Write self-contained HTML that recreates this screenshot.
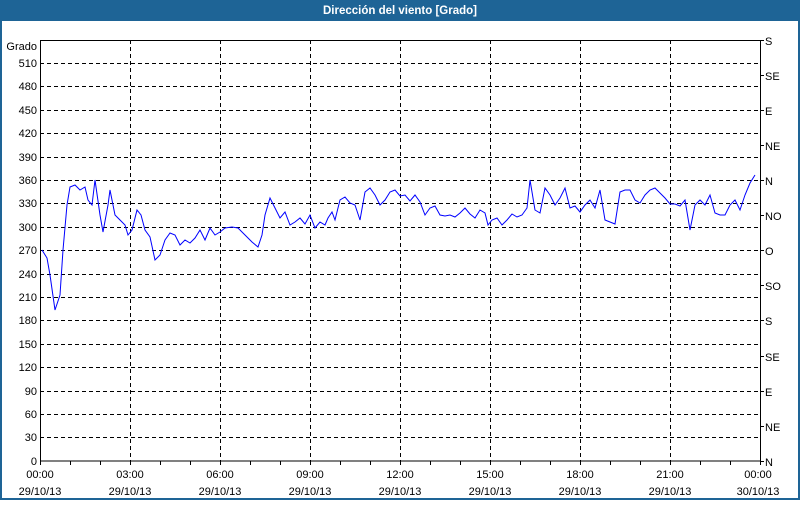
<!DOCTYPE html>
<html><head><style>
body{margin:0;width:800px;height:500px;overflow:hidden;background:#fff;font-family:"Liberation Sans",sans-serif}
</style></head><body>
<svg width="800" height="500" xmlns="http://www.w3.org/2000/svg" font-family="Liberation Sans, sans-serif" font-size="11">
<rect x="0" y="0" width="800" height="500" fill="#1e6496"/>
<rect x="2" y="21" width="796" height="477" fill="#fff"/>
<text x="400" y="14" fill="#fff" font-weight="bold" text-anchor="middle" font-size="11.5">Dirección del viento [Grado]</text>
<g stroke="#000" stroke-dasharray="4,3" stroke-width="1">
<line x1="40" x2="760" y1="63.5" y2="63.5"/><line x1="40" x2="760" y1="86.5" y2="86.5"/><line x1="40" x2="760" y1="110.5" y2="110.5"/><line x1="40" x2="760" y1="133.5" y2="133.5"/><line x1="40" x2="760" y1="157.5" y2="157.5"/><line x1="40" x2="760" y1="180.5" y2="180.5"/><line x1="40" x2="760" y1="203.5" y2="203.5"/><line x1="40" x2="760" y1="227.5" y2="227.5"/><line x1="40" x2="760" y1="250.5" y2="250.5"/><line x1="40" x2="760" y1="274.5" y2="274.5"/><line x1="40" x2="760" y1="297.5" y2="297.5"/><line x1="40" x2="760" y1="320.5" y2="320.5"/><line x1="40" x2="760" y1="344.5" y2="344.5"/><line x1="40" x2="760" y1="367.5" y2="367.5"/><line x1="40" x2="760" y1="391.5" y2="391.5"/><line x1="40" x2="760" y1="414.5" y2="414.5"/><line x1="40" x2="760" y1="437.5" y2="437.5"/>
<line x1="130.5" x2="130.5" y1="40" y2="461"/><line x1="220.5" x2="220.5" y1="40" y2="461"/><line x1="310.5" x2="310.5" y1="40" y2="461"/><line x1="400.5" x2="400.5" y1="40" y2="461"/><line x1="490.5" x2="490.5" y1="40" y2="461"/><line x1="580.5" x2="580.5" y1="40" y2="461"/><line x1="670.5" x2="670.5" y1="40" y2="461"/>
</g>
<path d="M40.5 461V40.5H760.5V461H40.5" fill="none" stroke="#000"/>
<g stroke="#000">
<path d="M70.5 461v4M100.5 461v4M130.5 461v4M160.5 461v4M190.5 461v4M220.5 461v4M250.5 461v4M280.5 461v4M310.5 461v4M340.5 461v4M370.5 461v4M400.5 461v4M430.5 461v4M460.5 461v4M490.5 461v4M520.5 461v4M550.5 461v4M580.5 461v4M610.5 461v4M640.5 461v4M670.5 461v4M700.5 461v4M730.5 461v4M760.5 461v4M40.5 461v4"/>
<path d="M760 40.5h4M760 75.5h4M760 110.5h4M760 145.5h4M760 180.5h4M760 215.5h4M760 250.5h4M760 285.5h4M760 320.5h4M760 356.5h4M760 391.5h4M760 426.5h4M760 461.5h4"/>
</g>
<g text-anchor="end" fill="#000">
<text x="37" y="50">Grado</text>
<text x="37" y="67">510</text><text x="37" y="90">480</text><text x="37" y="114">450</text><text x="37" y="137">420</text><text x="37" y="161">390</text><text x="37" y="184">360</text><text x="37" y="207">330</text><text x="37" y="231">300</text><text x="37" y="254">270</text><text x="37" y="278">240</text><text x="37" y="301">210</text><text x="37" y="324">180</text><text x="37" y="348">150</text><text x="37" y="371">120</text><text x="37" y="395">90</text><text x="37" y="418">60</text><text x="37" y="441">30</text><text x="37" y="465">0</text>
</g>
<g fill="#000">
<text x="765" y="45">S</text><text x="765" y="80">SE</text><text x="765" y="115">E</text><text x="765" y="150">NE</text><text x="765" y="185">N</text><text x="765" y="220">NO</text><text x="765" y="255">O</text><text x="765" y="290">SO</text><text x="765" y="325">S</text><text x="765" y="361">SE</text><text x="765" y="396">E</text><text x="765" y="431">NE</text><text x="765" y="466">N</text>
</g>
<g text-anchor="middle" fill="#000">
<text x="40" y="478">00:00</text><text x="40" y="495">29/10/13</text>
<text x="130" y="478">03:00</text><text x="130" y="495">29/10/13</text>
<text x="220" y="478">06:00</text><text x="220" y="495">29/10/13</text>
<text x="310" y="478">09:00</text><text x="310" y="495">29/10/13</text>
<text x="400" y="478">12:00</text><text x="400" y="495">29/10/13</text>
<text x="490" y="478">15:00</text><text x="490" y="495">29/10/13</text>
<text x="580" y="478">18:00</text><text x="580" y="495">29/10/13</text>
<text x="670" y="478">21:00</text><text x="670" y="495">29/10/13</text>
<text x="758" y="478">00:00</text><text x="758" y="495">30/10/13</text>
</g>
<polyline fill="none" stroke="#0000ff" stroke-width="1" points="42,250 47,258 50,275 55,310 60,295 63,250 67,205 70,187 75,185 80,190 85,187 88,200 92,205 95,180 100,215 103,232 108,205 110,190 115,215 120,220 125,225 128,235 132,230 137,210 141,215 145,230 150,237 155,260 160,255 165,240 170,233 175,235 180,245 185,240 190,243 195,238 200,230 205,240 210,228 215,235 220,232 225,228 232,227 238,228 245,235 252,242 258,247 262,235 265,215 270,198 275,208 280,218 285,212 290,225 295,222 300,218 305,224 310,215 315,228 320,222 325,225 328,218 332,212 335,220 340,200 345,197 350,203 355,205 360,220 365,192 370,188 375,195 380,205 385,200 390,192 395,190 400,196 405,195 410,201 415,195 420,202 425,215 430,208 435,206 440,215 445,216 450,215 455,217 460,213 465,208 470,214 475,218 480,210 485,213 488,225 492,220 497,218 502,225 507,220 512,214 517,217 522,215 527,208 530,180 535,210 540,213 545,188 550,195 555,205 560,198 565,188 570,208 575,206 580,212 585,205 590,200 595,208 600,190 605,220 610,222 615,224 620,192 625,190 630,190 635,200 640,203 645,195 650,190 655,188 660,193 665,198 670,204 675,204 680,206 685,200 690,230 695,205 700,200 705,205 710,195 715,213 720,215 725,215 730,205 735,200 740,210 745,195 750,183 755,175"/>
</svg>
</body></html>
